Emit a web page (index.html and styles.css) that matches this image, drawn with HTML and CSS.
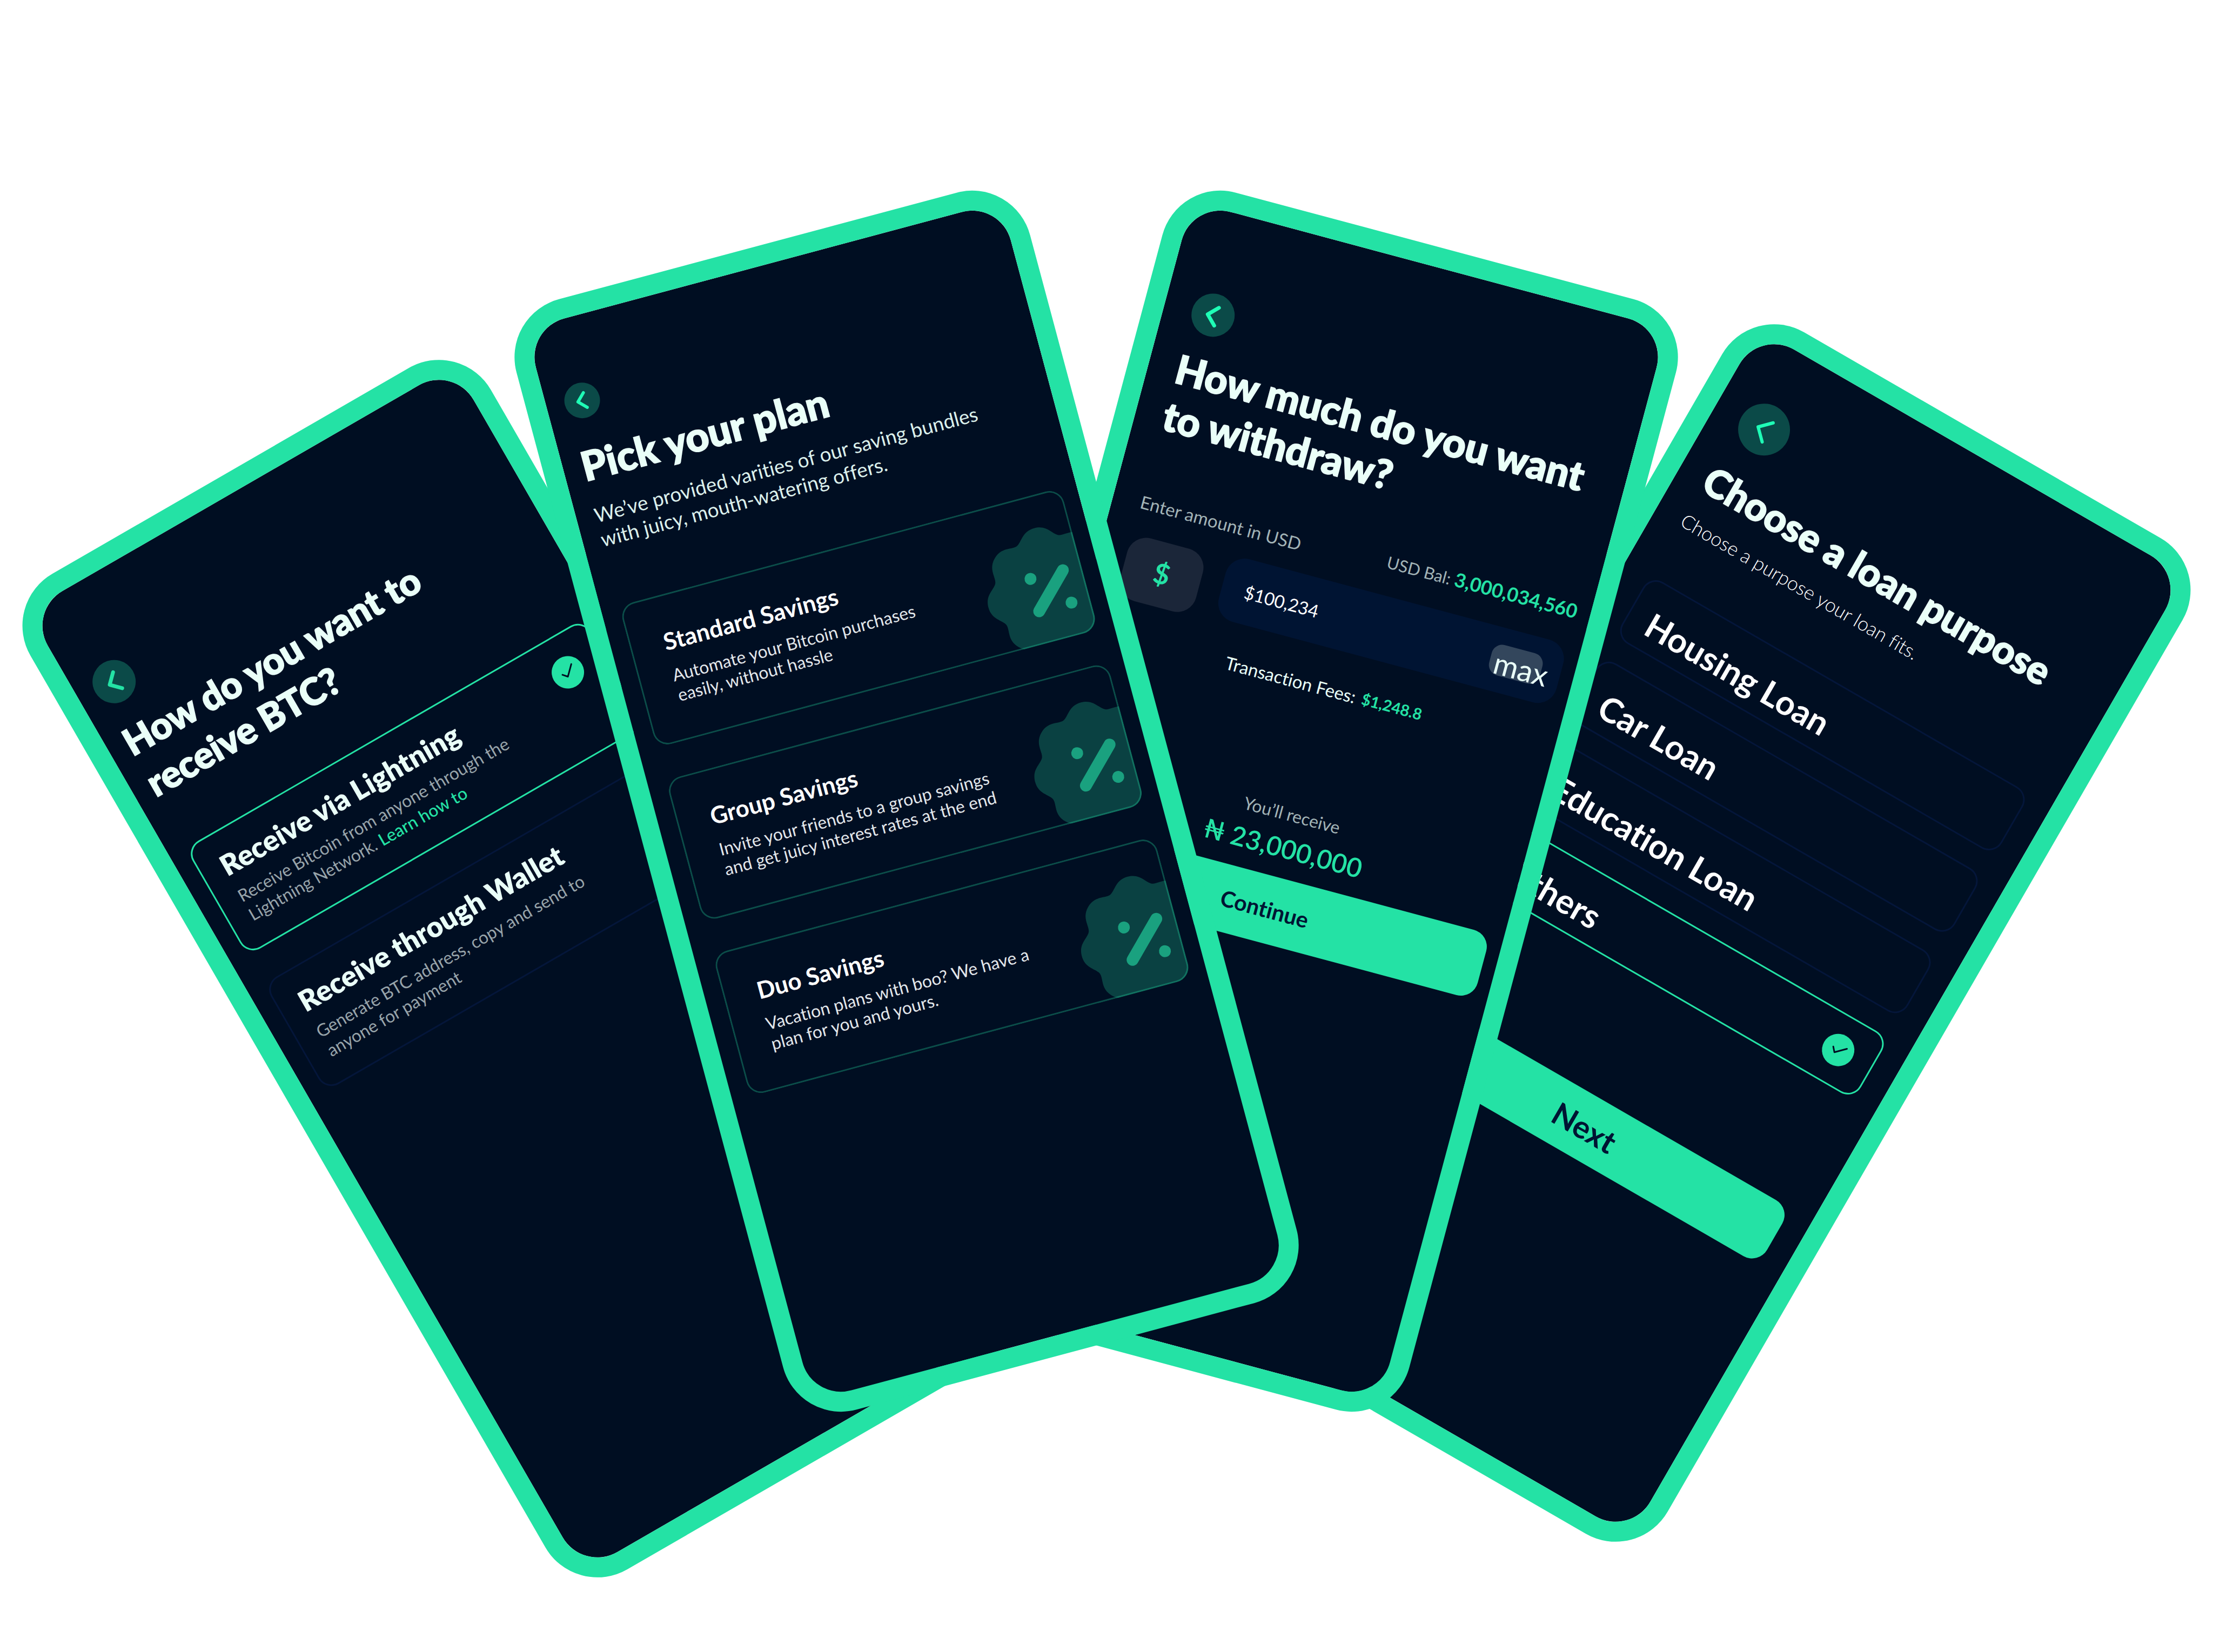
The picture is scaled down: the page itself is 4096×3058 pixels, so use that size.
FILE: index.html
```html
<!DOCTYPE html>
<html lang="en">
<head>
<meta charset="utf-8">
<meta name="viewport" content="width=device-width, initial-scale=1">
<title>Bitcoin savings app screens</title>
<link rel="stylesheet" href="styles.css">
</head>
<body>
<svg class="sprite" aria-hidden="true">
  <symbol id="chevron" viewBox="0 0 80 80">
    <path d="M47 24 30 41l17 17"/>
  </symbol>
  <symbol id="check" viewBox="0 0 60 60">
    <path d="M19 29l7 8 17-17"/>
  </symbol>
  <symbol id="percent" viewBox="-121 -121 242 242">
    <path class="seal" d="M120 0C120 24 101 29 96 40C92 51 102 68 85 85C68 102 51 92 40 96C29 101 24 120 0 120C-24 120 -29 101 -40 96C-51 92 -68 102 -85 85C-102 68 -92 51 -96 40C-101 29 -120 24 -120 0C-120 -24 -101 -29 -96 -40C-92 -51 -102 -68 -85 -85C-68 -102 -51 -92 -40 -96C-29 -101 -24 -120 0 -120C24 -120 29 -101 40 -96C51 -92 68 -102 85 -85C102 -68 92 -51 96 -40C101 -29 120 -24 120 0Z"/>
    <path class="slash" d="M-31 31L31 -31"/>
    <circle class="dot" cx="-31" cy="-31" r="11"/>
    <circle class="dot" cx="31" cy="31" r="11"/>
  </symbol>
</svg>

<main class="stage">
  <section class="phone receive">
    <button class="back" type="button" aria-label="Back"><svg><use href="#chevron"/></svg></button>
    <h1 class="heading">How do you want to<br>receive BTC?</h1>
    <div class="options">
      <label class="option selected">
        <span class="option-text">
          <span class="option-title">Receive via Lightning</span>
          <span class="option-note">Receive Bitcoin from anyone through the<br>Lightning Network. <a href="#learn">Learn how to</a></span>
        </span>
        <span class="tick"><input type="radio" name="method" checked><svg><use href="#check"/></svg></span>
      </label>
      <label class="option">
        <span class="option-text">
          <span class="option-title">Receive through Wallet</span>
          <span class="option-note">Generate BTC address, copy and send to<br>anyone for payment</span>
        </span>
        <span class="tick"><input type="radio" name="method"></span>
      </label>
    </div>
  </section>

  <section class="phone plans">
    <button class="back" type="button" aria-label="Back"><svg><use href="#chevron"/></svg></button>
    <h1 class="heading">Pick your plan</h1>
    <p class="intro">We’ve provided varities of our saving bundles<br>with juicy, mouth-watering offers.</p>
    <div class="plan-list">
      <article class="plan">
        <h2>Standard Savings</h2>
        <p>Automate your Bitcoin purchases<br>easily, without hassle</p>
        <svg class="badge"><use href="#percent"/></svg>
      </article>
      <article class="plan">
        <h2>Group Savings</h2>
        <p>Invite your friends to a group savings<br>and get juicy interest rates at the end</p>
        <svg class="badge"><use href="#percent"/></svg>
      </article>
      <article class="plan">
        <h2>Duo Savings</h2>
        <p>Vacation plans with boo? We have a<br>plan for you and yours.</p>
        <svg class="badge"><use href="#percent"/></svg>
      </article>
    </div>
  </section>

  <section class="phone withdraw">
    <button class="back" type="button" aria-label="Back"><svg><use href="#chevron"/></svg></button>
    <h1 class="heading">How much do you want<br>to withdraw?</h1>
    <div class="amount">
      <div class="currency">
        <label for="amount">Enter amount in USD</label>
        <span class="symbol">$</span>
      </div>
      <div class="entry">
        <p class="balance">USD Bal: <strong>3,000,034,560</strong></p>
        <div class="field">
          <input id="amount" type="text" value="$100,234">
          <button class="max" type="button">max</button>
        </div>
        <p class="fees"><span>Transaction Fees:</span><strong>$1,248.8</strong></p>
      </div>
    </div>
    <p class="receive-label">You’ll receive</p>
    <p class="receive-total">₦ 23,000,000</p>
    <button class="primary" type="button">Continue</button>
  </section>

  <section class="phone loan">
    <button class="back" type="button" aria-label="Back"><svg><use href="#chevron"/></svg></button>
    <h1 class="heading">Choose a loan purpose</h1>
    <p class="intro">Choose a purpose your loan fits.</p>
    <div class="options">
      <label class="option"><span class="option-title">Housing Loan</span><span class="tick"><input type="radio" name="loan"></span></label>
      <label class="option"><span class="option-title">Car Loan</span><span class="tick"><input type="radio" name="loan"></span></label>
      <label class="option"><span class="option-title">Education Loan</span><span class="tick"><input type="radio" name="loan"></span></label>
      <label class="option selected"><span class="option-title">Others</span><span class="tick"><input type="radio" name="loan" checked><svg><use href="#check"/></svg></span></label>
    </div>
    <button class="primary" type="button">Next</button>
  </section>
</main>
</body>
</html>
```
FILE: styles.css
```css
:root {
  --green: #24e2a5;
  --mint: #eafff8;
  --navy: #000e22;
  --navy-line: #04163a;
  --navy-field: #001433;
  --teal: #0b4a48;
}

*, *::before, *::after { box-sizing: border-box; }

body {
  margin: 0;
  background: #fff;
  color: #fff;
  font-family: Lato, "Open Sans", sans-serif;
  font-variant-ligatures: none;
}

h1, h2, p { margin: 0; }

button, input { font: inherit; font-variant-ligatures: none; }

button { border: 0; padding: 0; cursor: pointer; }

.sprite { position: absolute; width: 0; height: 0; }

/* The fan of four phones */
.stage {
  position: relative;
  min-height: 100vh;
  overflow: hidden;
}

.phone {
  position: absolute;
  display: flex;
  flex-direction: column;
  width: 984px;
  height: 2128px;
  border: 37px solid var(--green);
  border-radius: 111px;
  background: var(--navy);
  background-clip: padding-box;
  overflow: hidden;
}

.receive  { left: calc(50% - 1581px); top: 729px; z-index: 3; transform: rotate(-30deg); padding: 153px 26px 0 33px; }
.plans    { left: calc(50% - 862px);  top: 419px; z-index: 4; transform: rotate(-15deg); padding: 122px 30px 0 34px; }
.withdraw { left: calc(50% - 160px);  top: 419px; z-index: 2; transform: rotate(15deg);  padding: 153px 25px 0 52px; }
.loan     { left: calc(50% + 597px);  top: 663px; z-index: 1; transform: rotate(30deg);  padding: 108px 46px 0 52px; }

/* Shared parts */
.back {
  flex: none;
  width: 80px;
  height: 80px;
  border-radius: 50%;
  background: var(--teal);
}

.back svg {
  display: block;
  width: 100%;
  height: 100%;
  fill: none;
  stroke: #1fffb6;
  stroke-width: 7;
  stroke-linecap: round;
  stroke-linejoin: round;
}

.heading {
  color: var(--mint);
  font-size: 75px;
  line-height: 90px;
  font-weight: 900;
  -webkit-text-stroke: 2px var(--mint);
  white-space: nowrap;
}

.options { display: flex; flex-direction: column; }

.option {
  display: flex;
  justify-content: space-between;
  border: 3px solid var(--navy-line);
  border-radius: 28px;
  white-space: nowrap;
}

.option.selected { border-color: var(--green); }

.option-title { display: block; font-weight: 700; }

.tick { display: grid; width: 60px; height: 60px; }

.tick > * { grid-area: 1 / 1; width: 100%; height: 100%; margin: 0; }

.tick input { appearance: none; border-radius: 50%; }

.tick input:checked { background: var(--green); }

.tick svg {
  fill: none;
  stroke: var(--navy);
  stroke-width: 3;
  stroke-linecap: round;
  stroke-linejoin: round;
  pointer-events: none;
}

.primary {
  width: 100%;
  border-radius: 32px;
  background: var(--green);
  color: var(--navy-field);
  font-weight: 700;
}

/* Receive BTC */
.receive .back svg { stroke: var(--green); }

.receive .heading { margin-top: 28px; font-size: 69px; line-height: 87px; }

.receive .options { margin-top: 91px; gap: 60px; }

.receive .option { height: 230px; padding: 32px 42px 0 38px; }

.receive .option-title { color: var(--mint); font-size: 53px; line-height: 60px; font-weight: 800; }

.option-note {
  display: block;
  margin-top: 13px;
  color: #98a4aa;
  font-size: 32px;
  line-height: 40px;
}

.option-note a { color: var(--green); font-weight: 500; text-decoration: none; }

.receive .tick { margin-top: 7px; }

/* Saving plans */
.plans .back { width: 66px; height: 66px; }

.plans .heading { margin-top: 40px; }

.intro { white-space: nowrap; }

.plans .intro { margin-top: 26px; color: #dcf0ec; font-size: 37px; line-height: 46px; }

.plan-list { display: flex; flex-direction: column; gap: 62px; margin-top: 104px; }

.plan {
  position: relative;
  height: 272px;
  padding: 60px 63px;
  border-radius: 28px;
  overflow: hidden;
  white-space: nowrap;
}

.plan::after {
  content: "";
  position: absolute;
  inset: 0;
  border: 3px solid rgba(36, 226, 165, 0.3);
  border-radius: 28px;
}

.plan h2 { font-size: 44px; line-height: 52px; font-weight: 700; }

.plan p { margin-top: 19px; color: #e3e7eb; font-size: 32px; line-height: 38px; }

.badge { position: absolute; right: -55px; bottom: -29px; width: 242px; height: 242px; }

.seal { fill: #0a4142; }

.slash { fill: none; stroke: #1aa17f; stroke-width: 22; stroke-linecap: round; }

.dot { fill: #1aa17f; }

/* Withdraw */
.withdraw .heading { margin-top: 26px; font-size: 74px; }

.amount { display: flex; gap: 41px; margin-top: 87px; }

.currency { width: 145px; flex: none; padding-top: 12px; }

.currency label {
  display: block;
  color: #a3b4b7;
  font-size: 33px;
  line-height: 44px;
  white-space: nowrap;
}

.symbol {
  display: block;
  height: 120px;
  margin-top: 40px;
  border-radius: 36px;
  background: #1b2639;
  color: var(--green);
  font-size: 52px;
  line-height: 114px;
  font-weight: 700;
  text-align: center;
}

.entry { flex: 1; min-width: 0; }

.balance {
  color: #a3b4b7;
  font-size: 31px;
  line-height: 44px;
  text-align: right;
}

.balance strong { color: var(--green); font-size: 36px; }

.field {
  display: flex;
  align-items: center;
  height: 120px;
  margin-top: 40px;
  padding: 0 36px 0 43px;
  border-radius: 36px;
  background: var(--navy-field);
}

.field input {
  flex: 1;
  min-width: 0;
  padding: 0;
  border: 0;
  background: none;
  color: #fff;
  font-size: 33px;
  line-height: 44px;
}

.max {
  flex: none;
  width: 97px;
  height: 58px;
  padding: 6px 0 0 9px;
  border-radius: 20px;
  background: #33465c;
  color: var(--mint);
  font-size: 56px;
  line-height: 58px;
  text-align: left;
  white-space: nowrap;
}

.fees {
  display: flex;
  gap: 12px;
  margin-top: 53px;
  padding-left: 43px;
  color: var(--mint);
  font-size: 33px;
  line-height: 44px;
}

.fees strong { color: var(--green); font-size: 29px; }

.receive-label {
  margin-top: 198px;
  padding-left: 8px;
  color: #a3b4b7;
  font-size: 32px;
  line-height: 44px;
  text-align: center;
}

.receive-total {
  margin-top: 10px;
  padding-left: 8px;
  color: var(--green);
  font-size: 49px;
  line-height: 60px;
  font-weight: 600;
  text-align: center;
}

.withdraw .primary { height: 125px; margin-top: 26px; font-size: 41px; }

/* Loan purpose */
.loan .back { width: 96px; height: 96px; }

.loan .back svg { stroke-width: 5; }

.loan .heading { margin-top: 35px; font-size: 72px; }

.loan .intro { margin-top: 23px; color: #fff; font-size: 36px; line-height: 44px; font-weight: 300; }

.loan .options { margin-top: 98px; gap: 42px; }

.loan .option {
  align-items: center;
  height: 132px;
  padding: 0 38px;
}

.loan .option-title { padding-top: 24px; font-size: 63px; line-height: 74px; }

.loan .primary { height: 120px; margin-top: 232px; font-size: 58px; }
```
